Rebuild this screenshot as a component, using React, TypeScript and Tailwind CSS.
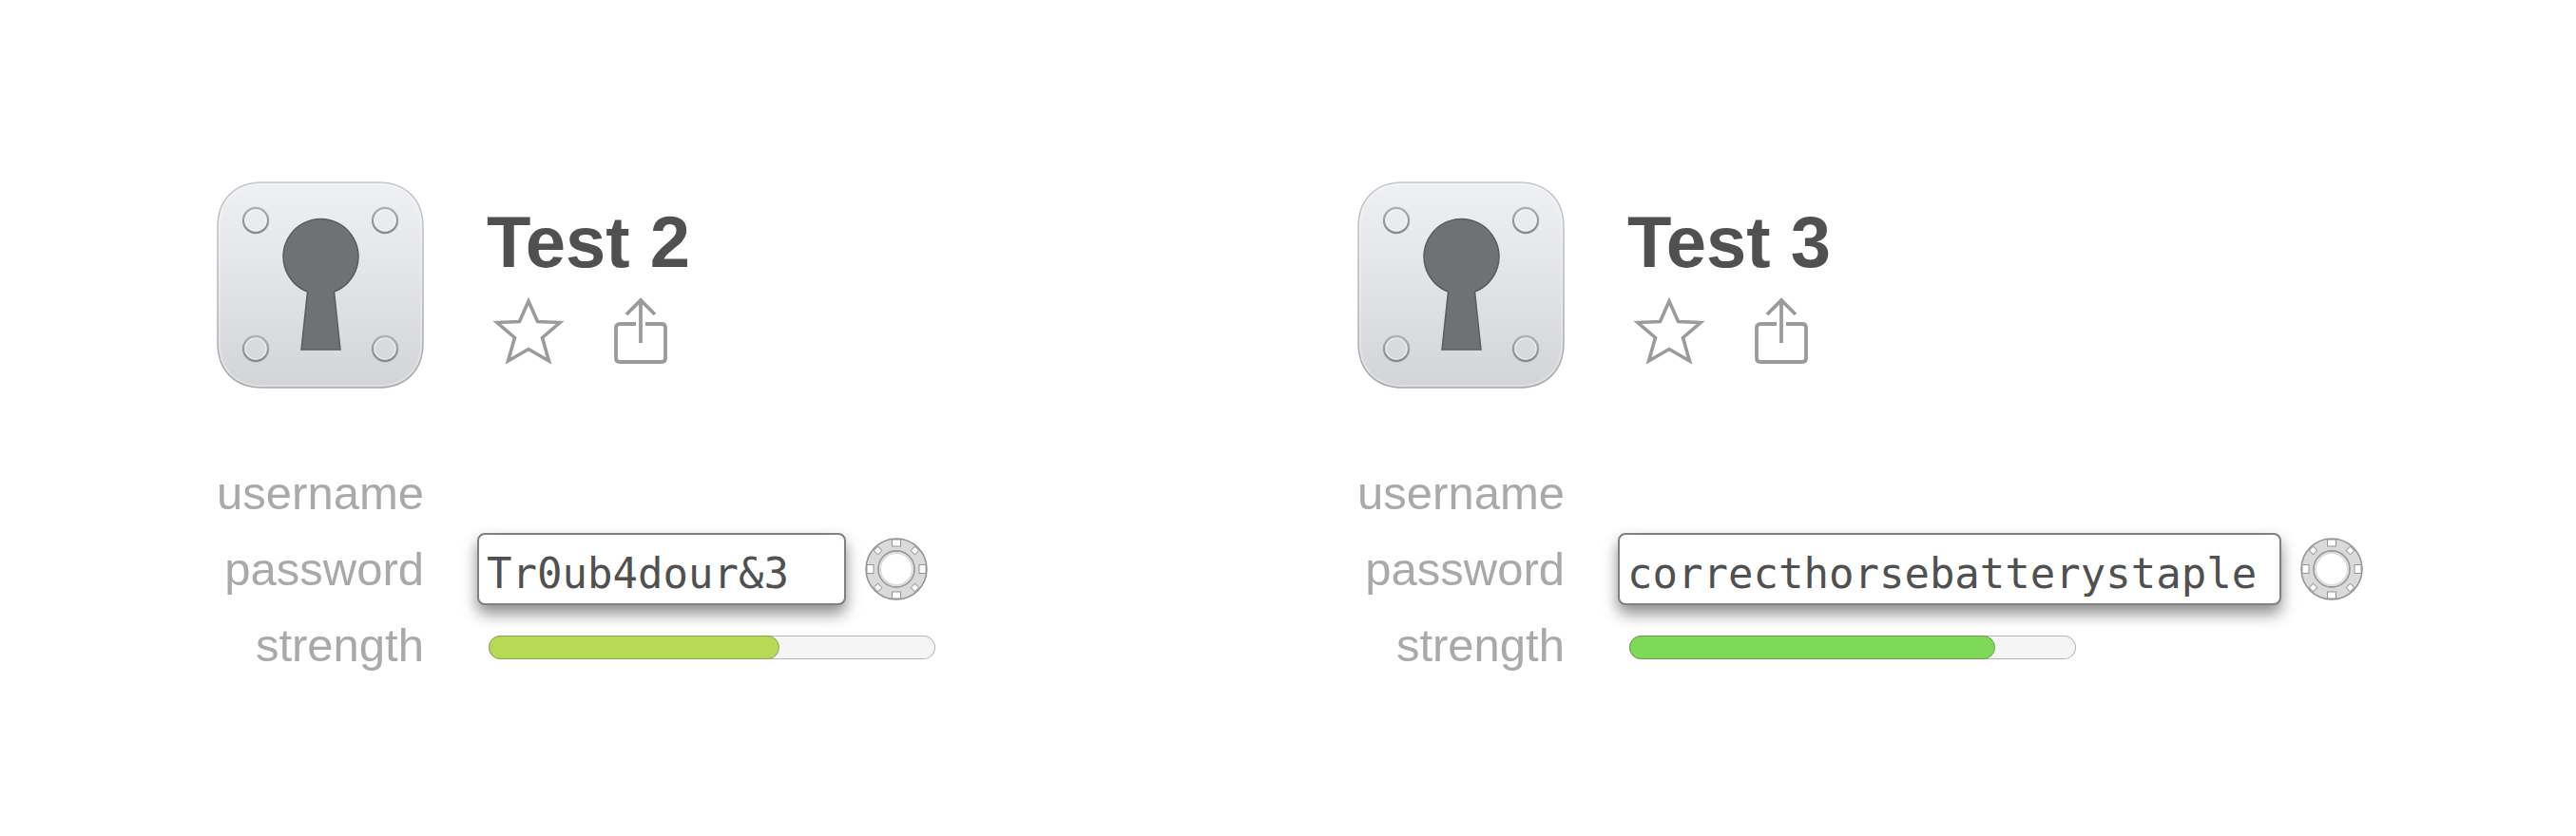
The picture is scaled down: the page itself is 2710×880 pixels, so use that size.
import React, { useId, useState } from 'react';

interface Login {
  id: string;
  title: string;
  password: string;
  fieldWidth: string;
  strength: number;
  barColor: string;
}

const logins: Login[] = [
  {
    id: 'test-2',
    title: 'Test 2',
    password: 'Tr0ub4dour&3',
    fieldWidth: 'w-[388px]',
    strength: 65,
    barColor: 'bg-[#b6da56] border-[#8fa556]',
  },
  {
    id: 'test-3',
    title: 'Test 3',
    password: 'correcthorsebatterystaple',
    fieldWidth: 'w-[698px]',
    strength: 82,
    barColor: 'bg-[#7dd956] border-[#6a9d55]',
  },
];

function LockIcon() {
  const id = useId();
  const rivets = [
    [41, 41],
    [177, 41],
    [41, 176],
    [177, 176],
  ];

  return (
    <svg width="218" height="218" viewBox="0 0 218 218" className="shrink-0" aria-hidden="true">
      <defs>
        <linearGradient id={`${id}-plate`} x1="0" y1="0" x2="0" y2="1">
          <stop offset="0" stopColor="#eff0f4" />
          <stop offset="0.35" stopColor="#e6e7eb" />
          <stop offset="1" stopColor="#d3d4d7" />
        </linearGradient>
        <linearGradient id={`${id}-edge`} x1="0" y1="0" x2="0" y2="1">
          <stop offset="0" stopColor="#c6c7c9" />
          <stop offset="1" stopColor="#a8a9ac" />
        </linearGradient>
        <linearGradient id={`${id}-rivet`} x1="0" y1="0" x2="0" y2="1">
          <stop offset="0" stopColor="#b0b1b4" />
          <stop offset="1" stopColor="#88898c" />
        </linearGradient>
      </defs>
      <path
        d="M48 1H170C199 1 217 19 217 48V170C217 199 199 217 170 217H48C19 217 1 199 1 170V48C1 19 19 1 48 1Z"
        fill={`url(#${id}-plate)`}
        stroke={`url(#${id}-edge)`}
        strokeWidth="1.5"
      />
      <path
        d="M48 3H170C198 3 215 20 215 48V170C215 198 198 215 170 215H48C20 215 3 198 3 170V48C3 20 20 3 48 3Z"
        fill="none"
        stroke="#fff"
        strokeOpacity="0.25"
        strokeWidth="2"
      />
      {rivets.map(([cx, cy]) => (
        <g key={`${cx}-${cy}`} fill="none">
          <circle cx={cx} cy={cy} r="13" stroke={`url(#${id}-rivet)`} strokeWidth="2.4" />
          <circle cx={cx} cy={cy} r="11" stroke="#fff" strokeOpacity="0.4" strokeWidth="1.5" />
        </g>
      ))}
      <path
        d="M95.5 116A39.5 39.5 0 1 1 123.5 116L130 177H89Z"
        fill="#707173"
        stroke="#5b5c5e"
        strokeWidth="1.5"
      />
    </svg>
  );
}

function StarIcon() {
  return (
    <svg width="76" height="74" viewBox="0 0 76 74" fill="none" stroke="#9b9b9b" strokeWidth="3.6" aria-hidden="true">
      <path d="M38 6L47.5 27.5L71 28.5L52.5 44.500L59.500 69L38 56.500L16.500 69L23.500 44.500L5 28.500L28.500 27.500Z" />
    </svg>
  );
}

function ShareIcon() {
  return (
    <svg width="56" height="74" viewBox="0 0 56 74" fill="none" stroke="#9b9b9b" strokeWidth="3.8" aria-hidden="true">
      <path d="M23 30H6Q2 30 2 34V66Q2 70 6 70H50Q54 70 54 66V34Q54 30 50 30H33" />
      <path d="M28 50V5M13 20L28 5L43 20" />
    </svg>
  );
}

function DialIcon() {
  return (
    <svg width="66" height="66" viewBox="0 0 66 66" aria-hidden="true">
      <circle cx="33" cy="33" r="32" fill="#dadada" stroke="#949494" strokeWidth="1.5" />
      {[0, 90, 180, 270].map((angle) => (
        <rect
          key={angle}
          x="28.5"
          y="2"
          width="9"
          height="7"
          fill="#fff"
          stroke="#949494"
          transform={`rotate(${angle} 33 33)`}
        />
      ))}
      {[45, 135, 225, 315].map((angle) => (
        <rect
          key={angle}
          x="30"
          y="2.5"
          width="6"
          height="6"
          fill="#fff"
          stroke="#a2a2a2"
          transform={`rotate(${angle} 33 33)`}
        />
      ))}
      <circle cx="33" cy="33" r="19" fill="#fff" stroke="#9c9c9c" strokeWidth="1.8" />
      <circle cx="33" cy="33" r="17" fill="none" stroke="#dcdcdc" strokeWidth="2" />
    </svg>
  );
}

function StrengthBar({ value, color, labelledBy }: { value: number; color: string; labelledBy: string }) {
  return (
    <div
      role="meter"
      aria-labelledby={labelledBy}
      aria-valuemin={0}
      aria-valuemax={100}
      aria-valuenow={value}
      className="mt-1 ml-3 h-[25px] w-[470px] rounded-full bg-[#f5f5f5] inset-ring inset-ring-[#b4b4b4]"
    >
      <div className={`h-full rounded-full border ${color}`} style={{ width: `${value}%` }} />
    </div>
  );
}

function LoginCard({ login }: { login: Login }) {
  const [password, setPassword] = useState(login.password);

  return (
    <section>
      <header className="flex items-start gap-[66px]">
        <LockIcon />
        <div className="pt-6">
          <h2 className="text-[76px] leading-[80px] font-bold text-[#505050]">{login.title}</h2>
          <div className="mt-4 ml-1.5 flex gap-[52px]">
            <button type="button" aria-label="Favorite">
              <StarIcon />
            </button>
            <button type="button" aria-label="Share">
              <ShareIcon />
            </button>
          </div>
        </div>
      </header>

      <div className="mt-[70px] grid grid-cols-[218px_1fr] gap-x-14 text-[49px] leading-[80px] text-[#a9a9a9]">
        <label htmlFor={`${login.id}-username`} className="text-right">
          username
        </label>
        <input id={`${login.id}-username`} type="text" className="h-20 w-[388px] px-2 outline-none" />

        <label htmlFor={`${login.id}-password`} className="text-right">
          password
        </label>
        <div className="flex items-center gap-5">
          <input
            id={`${login.id}-password`}
            type="text"
            value={password}
            onChange={(e) => setPassword(e.target.value)}
            spellCheck={false}
            className={`h-[76px] ${login.fieldWidth} rounded-lg border-2 border-[#808080] bg-white px-2 pt-2.5 font-['DejaVu_Sans_Mono',monospace] text-[44px] text-[#505050] shadow-[0_9px_16px_rgba(0,0,0,0.45)] outline-none`}
          />
          <button type="button" aria-label="Password generator">
            <DialIcon />
          </button>
        </div>

        <span id={`${login.id}-strength`} className="text-right">
          strength
        </span>
        <div className="flex items-center">
          <StrengthBar value={login.strength} color={login.barColor} labelledBy={`${login.id}-strength`} />
        </div>
      </div>
    </section>
  );
}

export default function App() {
  return (
    <main className="grid min-h-screen grid-cols-1 content-start gap-y-20 bg-white pt-[191px] pr-[82px] pb-20 pl-[228px] font-['Liberation_Sans',Arial,sans-serif] 2xl:grid-cols-2">
      {logins.map((login) => (
        <LoginCard key={login.id} login={login} />
      ))}
    </main>
  );
}
